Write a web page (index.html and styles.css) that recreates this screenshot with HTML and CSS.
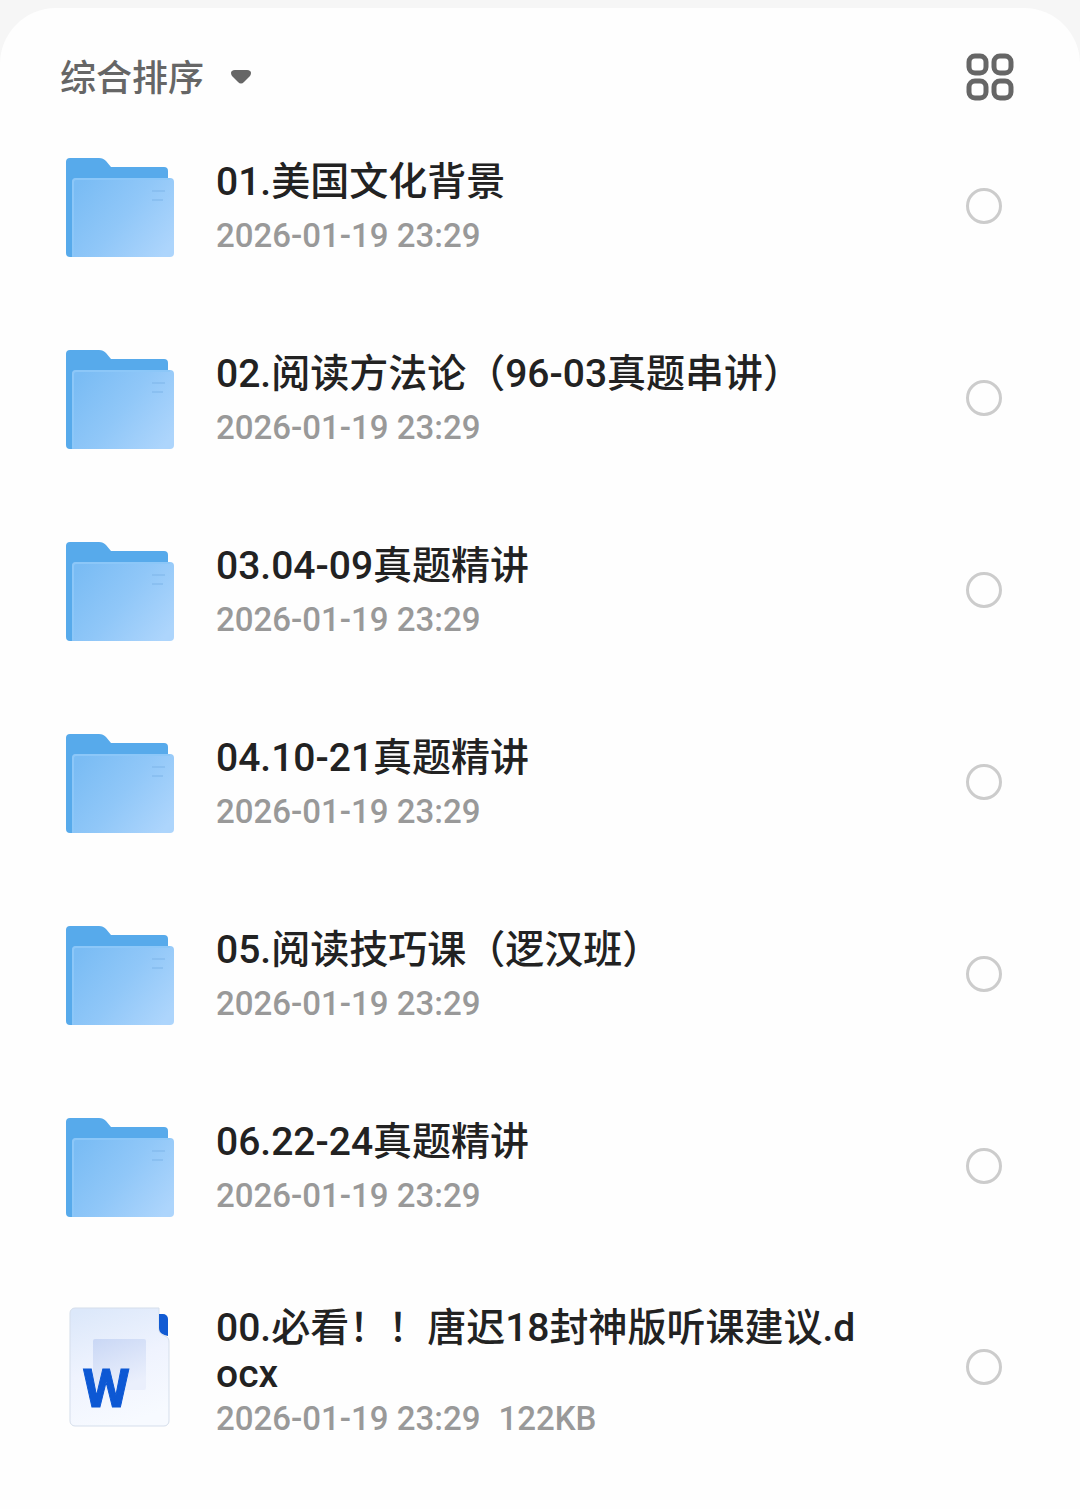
FILE: index.html
```html
<!DOCTYPE html>
<html lang="zh-CN">
  <head>
    <meta charset="UTF-8" />
    <meta name="viewport" content="width=device-width, initial-scale=1.0" />
    <title>文件列表</title>
    <link rel="stylesheet" href="styles.css" />
  </head>
  <body>
    <!-- shared folder icon -->
    <svg class="sprite" aria-hidden="true">
      <defs>
        <linearGradient id="folderFront" x1="0" y1="0.2" x2="1" y2="0.8">
          <stop offset="0" stop-color="#7abcf4" />
          <stop offset="0.5" stop-color="#90c7f8" />
          <stop offset="1" stop-color="#add5fc" />
        </linearGradient>
      </defs>
      <symbol id="folder" viewBox="0 -1 120 120">
        <path d="M6 15a4 4 0 0 1 4-4h29c3 0 5 1 7 3l5 6h53a4 4 0 0 1 4 4v20H16v66h-6a4 4 0 0 1-4-4z" fill="#57aaeb" />
        <path d="M12 35a4 4 0 0 1 4-4h94a4 4 0 0 1 4 4v71a4 4 0 0 1-4 4H12z" fill="url(#folderFront)" />
        <path d="M13 109V35a3 3 0 0 1 3-3h94" fill="none" stroke="#8cc7f8" stroke-width="2" />
        <path d="M92 44h13M92 53h11" stroke="#82b9ec" stroke-width="2" opacity="0.6" />
      </symbol>
    </svg>

    <main class="panel">
      <header class="toolbar">
        <div class="sort">
          <select class="sort-select" aria-label="排序方式">
            <option>综合排序</option>
          </select>
          <svg class="caret" viewBox="0 0 20 14" aria-hidden="true">
            <path d="M4 0h12c4 0 5 3 3 6l-6 6c-2 2-4 2-6 0L1 6C-1 3 0 0 4 0z" fill="#666" />
          </svg>
        </div>
        <button type="button" class="view-toggle" aria-label="网格视图">
          <svg viewBox="0 0 48 48" fill="none" stroke="#666" stroke-width="5">
            <rect x="3" y="3" width="17" height="17" rx="6" />
            <rect x="28" y="3" width="17" height="17" rx="6" />
            <rect x="3" y="28" width="17" height="17" rx="6" />
            <rect x="28" y="28" width="17" height="17" rx="6" />
          </svg>
        </button>
      </header>

      <ul class="file-list">
        <li class="file">
          <svg class="file-icon"><use href="#folder" /></svg>
          <label class="file-info" for="file1">
            <span class="file-name">01.美国文化背景</span>
            <span class="file-meta">2026-01-19 23:29</span>
          </label>
          <input type="checkbox" class="check" id="file1" />
        </li>
        <li class="file">
          <svg class="file-icon"><use href="#folder" /></svg>
          <label class="file-info" for="file2">
            <span class="file-name">02.阅读方法论（96-03真题串讲）</span>
            <span class="file-meta">2026-01-19 23:29</span>
          </label>
          <input type="checkbox" class="check" id="file2" />
        </li>
        <li class="file">
          <svg class="file-icon"><use href="#folder" /></svg>
          <label class="file-info" for="file3">
            <span class="file-name">03.04-09真题精讲</span>
            <span class="file-meta">2026-01-19 23:29</span>
          </label>
          <input type="checkbox" class="check" id="file3" />
        </li>
        <li class="file">
          <svg class="file-icon"><use href="#folder" /></svg>
          <label class="file-info" for="file4">
            <span class="file-name">04.10-21真题精讲</span>
            <span class="file-meta">2026-01-19 23:29</span>
          </label>
          <input type="checkbox" class="check" id="file4" />
        </li>
        <li class="file">
          <svg class="file-icon"><use href="#folder" /></svg>
          <label class="file-info" for="file5">
            <span class="file-name">05.阅读技巧课（逻汉班）</span>
            <span class="file-meta">2026-01-19 23:29</span>
          </label>
          <input type="checkbox" class="check" id="file5" />
        </li>
        <li class="file">
          <svg class="file-icon"><use href="#folder" /></svg>
          <label class="file-info" for="file6">
            <span class="file-name">06.22-24真题精讲</span>
            <span class="file-meta">2026-01-19 23:29</span>
          </label>
          <input type="checkbox" class="check" id="file6" />
        </li>
        <li class="file file-doc">
          <svg class="file-icon" viewBox="0 0 120 120">
            <defs>
              <linearGradient id="docPage" x1="0.2" y1="0" x2="0.5" y2="1">
                <stop offset="0" stop-color="#dce8fa" />
                <stop offset="0.5" stop-color="#eff3fe" />
                <stop offset="1" stop-color="#f7faff" />
              </linearGradient>
              <linearGradient id="docSquare" x1="0" y1="0" x2="0.4" y2="1">
                <stop offset="0" stop-color="#c9d7f5" />
                <stop offset="1" stop-color="#eaeffc" />
              </linearGradient>
            </defs>
            <path d="M15 1h84v21c0 4 3 6 6 7s4 3 4 6v79a5 5 0 0 1-5 5H15a5 5 0 0 1-5-5V6a5 5 0 0 1 5-5z" fill="url(#docPage)" stroke="#d5deeb" />
            <path d="M99 7h4a5 5 0 0 1 5 5v17c-5-1-9-3-9-8z" fill="#125bd3" />
            <rect x="33" y="32" width="53" height="51" rx="2" fill="url(#docSquare)" />
            <text class="doc-letter" x="46" y="100" text-anchor="middle">W</text>
          </svg>
          <label class="file-info" for="file7">
            <span class="file-name">00.必看！！唐迟18封神版听课建议.docx</span>
            <span class="file-meta">
              <span>2026-01-19 23:29</span>
              <span>122KB</span>
            </span>
          </label>
          <input type="checkbox" class="check" id="file7" />
        </li>
      </ul>
    </main>
  </body>
</html>
```

FILE: styles.css
```css
* {
  box-sizing: border-box;
}
body {
  margin: 0;
  padding-top: 8px;
  min-height: 100vh;
  display: flex;
  flex-direction: column;
  background-color: #f6f6f6;
  font-family: Roboto, "Noto Sans CJK SC", sans-serif;
}
.sprite {
  position: absolute;
  width: 0;
  height: 0;
}
.panel {
  flex: 1;
  background-color: #fefefe;
  border-radius: 56px 56px 0 0;
}

.toolbar {
  display: flex;
  align-items: center;
  justify-content: space-between;
  padding: 36px 66px 0 60px;
}
.sort {
  display: flex;
  align-items: center;
  gap: 26px;
}
.sort-select {
  appearance: none;
  border: none;
  padding: 4px 0 0;
  background: none;
  color: #666;
  font-family: inherit;
  font-size: 36px;
  font-weight: 500;
  line-height: 62px;
  cursor: pointer;
}
.caret {
  width: 20px;
  height: 14px;
  pointer-events: none;
}
.view-toggle {
  border: none;
  padding: 0;
  background: none;
  cursor: pointer;
}
.view-toggle svg {
  display: block;
  width: 48px;
  height: 48px;
}

.file-list {
  list-style-type: none;
  margin: 0;
  padding: 0;
}
.file {
  display: flex;
  align-items: center;
  min-height: 192px;
  padding: 0 78px 0 60px;
}
.file-icon {
  flex: none;
  width: 120px;
  height: 120px;
}
.doc-letter {
  fill: #0d58d4;
  stroke: #0d58d4;
  stroke-width: 1px;
  font-size: 54px;
  font-weight: 700;
}
.file-info {
  flex: 1;
  display: flex;
  flex-direction: column;
  gap: 11px;
  margin: 0 96px 0 36px;
  padding-top: 2px;
}
.file-name {
  color: #222;
  font-size: 39px;
  font-weight: 500;
  line-height: 46px;
  word-break: break-all;
}
.file-meta {
  display: flex;
  gap: 18px;
  color: #999;
  font-size: 33px;
  font-weight: 500;
  line-height: 40px;
}
.file-doc {
  min-height: 210px;
}
.file-doc .file-info {
  gap: 2px;
  padding-top: 10px;
}
.check {
  flex: none;
  appearance: none;
  width: 36px;
  height: 36px;
  margin: 0;
  border: 3px solid #ccc;
  border-radius: 50%;
  cursor: pointer;
}
.check:checked {
  border-color: #57aaeb;
  background-color: #57aaeb;
}
```
